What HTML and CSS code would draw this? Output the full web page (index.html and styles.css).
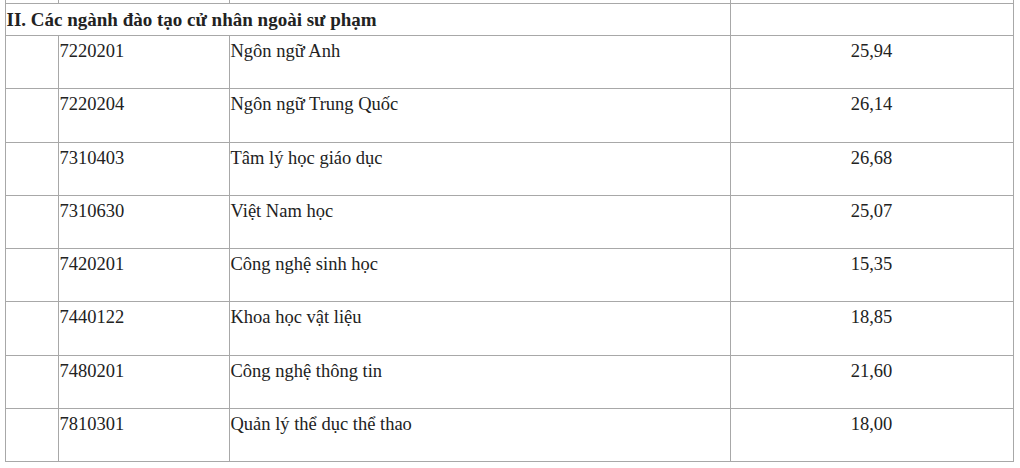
FILE: index.html
```html
<!DOCTYPE html>
<html lang="vi">
<head>
<meta charset="utf-8">
<link rel="stylesheet" href="styles.css">
</head>
<body>
<table class="grid">
  <colgroup>
    <col class="c1"><col class="c2"><col class="c3"><col class="c4">
  </colgroup>
  <tr class="prev"><td></td><td></td><td></td><td></td></tr>
  <tr class="section"><td colspan="3">II. Các ngành đào tạo cử nhân ngoài sư phạm</td><td></td></tr>
  <tr class="row"><td></td><td>7220201</td><td>Ngôn ngữ Anh</td><td class="num">25,94</td></tr>
  <tr class="row"><td></td><td>7220204</td><td>Ngôn ngữ Trung Quốc</td><td class="num">26,14</td></tr>
  <tr class="row"><td></td><td>7310403</td><td>Tâm lý học giáo dục</td><td class="num">26,68</td></tr>
  <tr class="row"><td></td><td>7310630</td><td>Việt Nam học</td><td class="num">25,07</td></tr>
  <tr class="row"><td></td><td>7420201</td><td>Công nghệ sinh học</td><td class="num">15,35</td></tr>
  <tr class="row"><td></td><td>7440122</td><td>Khoa học vật liệu</td><td class="num">18,85</td></tr>
  <tr class="row"><td></td><td>7480201</td><td>Công nghệ thông tin</td><td class="num">21,60</td></tr>
  <tr class="row"><td></td><td>7810301</td><td>Quản lý thể dục thể thao</td><td class="num">18,00</td></tr>
</table>
</body>
</html>
```

FILE: styles.css
```css
html, body {
  margin: 0;
  padding: 0;
  background: #ffffff;
}
body {
  font-family: "Liberation Serif", "Times New Roman", serif;
  color: #222222;
  overflow: hidden;
}
.grid {
  border-collapse: collapse;
  table-layout: fixed;
  width: 1008px;
  margin: -8px 0 0 4.5px;
  font-size: 18.5px;
}
.c1 { width: 53px; }
.c2 { width: 171px; }
.c3 { width: 501px; }
.c4 { width: 283px; }
.grid td {
  border: 1px solid #a8a8a8;
  padding: 0 1px;
  vertical-align: top;
  box-sizing: border-box;
}
.prev td {
  height: 11px;
}
.section td {
  height: 32px;
  font-weight: bold;
  font-size: 19px;
  vertical-align: middle;
  line-height: 20px;
}
.row td {
  height: 53.25px;
  padding-top: 5px;
  line-height: 20px;
}
.row td.num {
  text-align: center;
}
```
